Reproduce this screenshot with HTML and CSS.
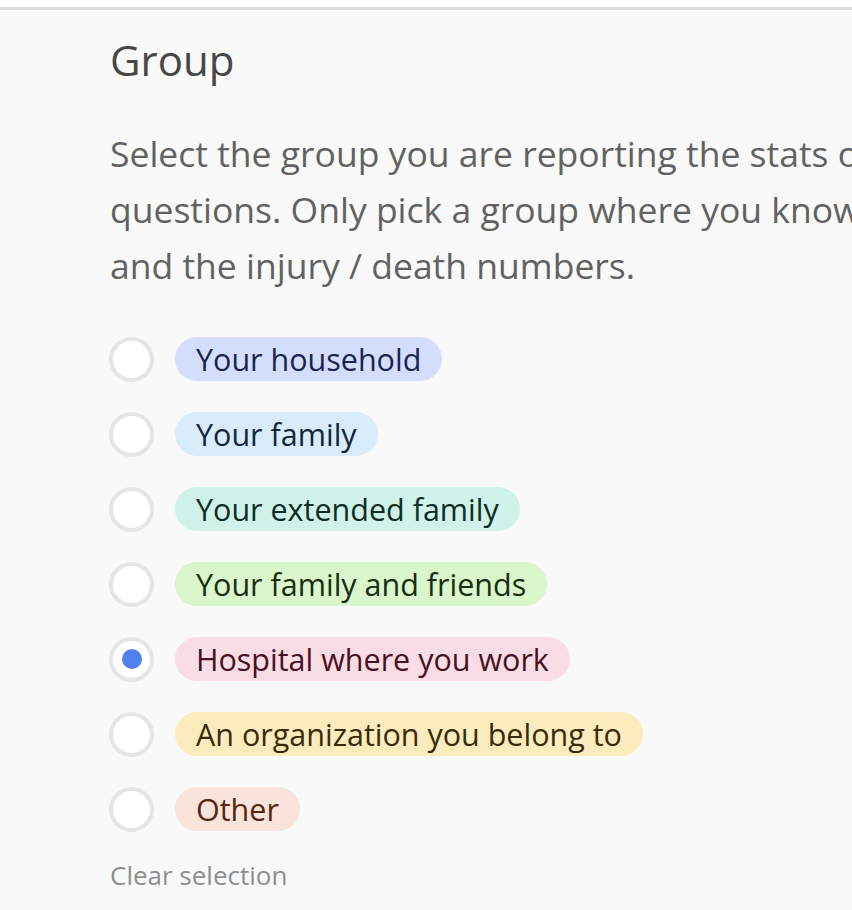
FILE: index.html
```html
<!DOCTYPE html>
<html lang="en">
<head>
  <meta charset="UTF-8">
  <title>Group</title>
  <link rel="stylesheet" href="styles.css">
</head>
<body>
  <div class="top-bar"></div>
  <div class="question">
    <h2 class="question-title">Group</h2>
    <p class="question-desc">
      Select the group you are reporting the stats on<br>
      questions. Only pick a group where you know<br>
      and the injury / death numbers.
    </p>

    <div class="options">
      <label class="option">
        <input type="radio" name="group" value="household">
        <span class="radio"></span>
        <span class="tag tag-blue">Your household</span>
      </label>
      <label class="option">
        <input type="radio" name="group" value="family">
        <span class="radio"></span>
        <span class="tag tag-sky">Your family</span>
      </label>
      <label class="option">
        <input type="radio" name="group" value="extended">
        <span class="radio"></span>
        <span class="tag tag-teal">Your extended family</span>
      </label>
      <label class="option">
        <input type="radio" name="group" value="friends">
        <span class="radio"></span>
        <span class="tag tag-green">Your family and friends</span>
      </label>
      <label class="option">
        <input type="radio" name="group" value="hospital" checked>
        <span class="radio"></span>
        <span class="tag tag-pink">Hospital where you work</span>
      </label>
      <label class="option">
        <input type="radio" name="group" value="organization">
        <span class="radio"></span>
        <span class="tag tag-yellow">An organization you belong to</span>
      </label>
      <label class="option">
        <input type="radio" name="group" value="other">
        <span class="radio"></span>
        <span class="tag tag-orange">Other</span>
      </label>
    </div>

    <a class="clear-link" href="#">Clear selection</a>
  </div>
</body>
</html>
```

FILE: styles.css
```css
body {
  margin: 0;
  padding: 0;
  background: #f9f9f9;
  font-family: "Open Sans", "Noto Sans", sans-serif;
  overflow: hidden;
}

.top-bar {
  height: 7px;
  background: #fff;
  border-bottom: 3px solid #dcdcdc;
}

.question {
  padding: 22px 0 0 110px;
  white-space: nowrap;
}

.question-title {
  margin: 0;
  font-size: 42px;
  font-weight: 400;
  line-height: 56px;
  color: #474747;
}

.question-desc {
  margin: 37px 0 0;
  font-size: 35.5px;
  line-height: 56px;
  color: #626262;
}

.options {
  display: flex;
  flex-direction: column;
  gap: 31px;
  margin-top: 44px;
}

.option {
  display: flex;
  align-items: center;
  gap: 21px;
  height: 44px;
  margin-left: -1px;
  cursor: pointer;
}

.option input {
  display: none;
}

.radio {
  box-sizing: border-box;
  width: 45px;
  height: 45px;
  border: 4px solid #e5e5e5;
  border-radius: 50%;
  background: #fff;
  display: flex;
  align-items: center;
  justify-content: center;
}

.option input:checked + .radio::after {
  content: "";
  width: 20px;
  height: 20px;
  border-radius: 50%;
  background: #4f80ee;
}

.tag {
  height: 44px;
  line-height: 44px;
  padding: 0 21px;
  border-radius: 22px;
  font-size: 30.5px;
}

.tag-blue { background: #d4defc; color: #1b2350; }
.tag-sky { background: #d9ecfc; color: #14263d; }
.tag-teal { background: #cff3e8; color: #102d25; }
.tag-green { background: #d9f6cc; color: #1a2d10; }
.tag-pink { background: #fadde4; color: #4a1022; }
.tag-yellow { background: #fcebbd; color: #3a2b08; }
.tag-orange { background: #f9e3da; color: #5a2412; }

.clear-link {
  display: block;
  margin-top: 28px;
  font-size: 26px;
  line-height: 32px;
  color: #8e8e8e;
  text-decoration: none;
}
```
